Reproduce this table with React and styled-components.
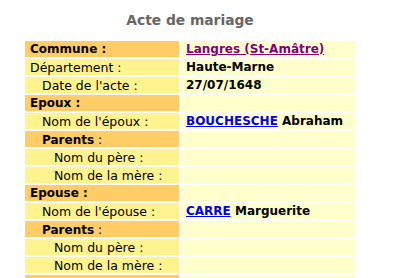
import React from "react";
import styled, { createGlobalStyle } from "styled-components";

const GlobalStyle = createGlobalStyle`
  body {
    margin: 0;
    overflow: hidden;
    background: #ffffff;
    font-family: "DejaVu Sans", Verdana, sans-serif;
  }
`;

const Page = styled.div`
  width: 380px;
  padding-top: 11px;
`;

const Title = styled.h2`
  margin: 0 0 12px 0;
  text-align: center;
  font-size: 13.8px;
  line-height: 18px;
  font-weight: bold;
  color: #666666;
`;

const Grid = styled.div`
  display: grid;
  grid-template-columns: 154px 174px;
  gap: 2px;
  width: 330px;
  margin: 0 auto;
`;

const Label = styled.div`
  box-sizing: border-box;
  height: 16px;
  padding: 1px 0 0 ${(p) => 5 + (p.$level || 0) * 12}px;
  line-height: 15px;
  font-size: ${(p) => (p.$bold ? "12px" : "12.5px")};
  color: #000000;
  white-space: nowrap;
  overflow: hidden;
  background: ${(p) => (p.$head ? "#ffcc66" : "#fff38f")};
  font-weight: ${(p) => (p.$bold ? "bold" : "normal")};
`;

const Strong = styled.b`
  font-size: 12px;
  font-weight: bold;
`;

const Value = styled.div`
  box-sizing: border-box;
  height: 16px;
  padding: 1px 0 0 5px;
  line-height: 15px;
  font-size: 12px;
  font-weight: bold;
  color: #000000;
  white-space: nowrap;
  overflow: hidden;
  background: #ffffcc;
`;

const Link = styled.a`
  color: ${(p) => (p.$visited ? "#800080" : "#0000ee")};
  text-decoration: underline;
`;

const rows = [
  { label: "Commune :", head: true, bold: true, value: <Link href="#" $visited>Langres (St-Amâtre)</Link> },
  { label: "Département :", value: "Haute-Marne" },
  { label: "Date de l'acte :", level: 1, value: "27/07/1648" },
  { label: "Epoux :", head: true, bold: true },
  { label: "Nom de l'époux :", level: 1, value: <><Link href="#">BOUCHESCHE</Link> Abraham</> },
  { label: <><Strong>Parents</Strong> :</>, head: true, level: 1 },
  { label: "Nom du père :", level: 2 },
  { label: "Nom de la mère :", level: 2 },
  { label: "Epouse :", head: true, bold: true },
  { label: "Nom de l'épouse :", level: 1, value: <><Link href="#">CARRE</Link> Marguerite</> },
  { label: <><Strong>Parents</Strong> :</>, head: true, level: 1 },
  { label: "Nom du père :", level: 2 },
  { label: "Nom de la mère :", level: 2 },
  { label: "", head: true, bold: true },
];

export default function App() {
  return (
    <Page>
      <GlobalStyle />
      <Title>Acte de mariage</Title>
      <Grid>
        {rows.map((r, i) => (
          <React.Fragment key={i}>
            <Label $head={r.head} $bold={r.bold} $level={r.level}>
              {r.label}
            </Label>
            <Value>{r.value}</Value>
          </React.Fragment>
        ))}
      </Grid>
    </Page>
  );
}
